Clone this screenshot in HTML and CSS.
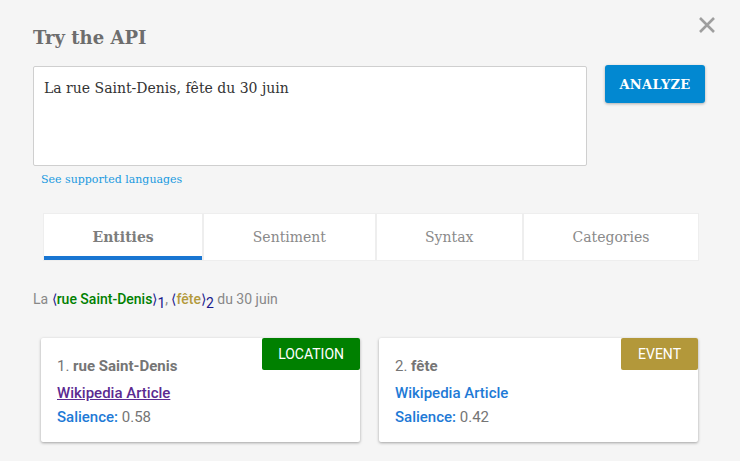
FILE: index.html
```html
<!DOCTYPE html>
<html>
<head>
<meta charset="utf-8">
<link rel="stylesheet" href="styles.css">
</head>
<body>
<div class="dialog">
  <div class="header">
    <h1 class="title">Try the API</h1>
    <button class="close" aria-label="Close">
      <svg width="18" height="18" viewBox="0 0 18 18"><path d="M2 2 L16 16 M16 2 L2 16" stroke="#9e9e9e" stroke-width="2.6" fill="none"/></svg>
    </button>
  </div>
  <div class="input-row">
    <div class="input-col">
      <div class="textarea">La rue Saint-Denis, fête du 30 juin</div>
      <a class="langs" href="#">See supported languages</a>
    </div>
    <button class="analyze">ANALYZE</button>
  </div>
  <div class="tabs">
    <div class="tab active">Entities</div>
    <div class="tab">Sentiment</div>
    <div class="tab">Syntax</div>
    <div class="tab">Categories</div>
  </div>
  <p class="annotated">La <span class="br">⟨</span><span class="loc">rue Saint-Denis</span><span class="br">⟩<sub>1</sub></span>, <span class="br">⟨</span><span class="evt">fête</span><span class="br">⟩<sub>2</sub></span> du 30 juin</p>
  <div class="cards">
    <div class="card">
      <span class="badge badge-loc">LOCATION</span>
      <div class="name">1. <b>rue Saint-Denis</b></div>
      <a class="wiki visited" href="#">Wikipedia Article</a>
      <div class="sal"><span class="sal-label">Salience:</span> 0.58</div>
    </div>
    <div class="card">
      <span class="badge badge-evt">EVENT</span>
      <div class="name">2. <b>fête</b></div>
      <a class="wiki" href="#">Wikipedia Article</a>
      <div class="sal"><span class="sal-label">Salience:</span> 0.42</div>
    </div>
  </div>
</div>
</body>
</html>
```
FILE: styles.css
```css
html, body { margin: 0; padding: 0; }
body {
  background: #f5f5f5;
  font-family: "DejaVu Serif", serif;
  width: 740px;
  height: 461px;
  overflow: hidden;
}
.dialog { padding: 0 24px 0 33px; }
.header {
  display: flex;
  justify-content: space-between;
  align-items: flex-start;
  height: 66px;
}
.title {
  margin: 26px 0 0 0;
  font-size: 18px;
  font-weight: bold;
  color: #6d6d6d;
  line-height: 24px;
}
.close {
  margin-top: 16px;
  background: none;
  border: 0;
  padding: 0;
  width: 18px;
  height: 18px;
}
.input-row { display: flex; align-items: flex-start; }
.input-col { width: 554px; }
.textarea {
  box-sizing: border-box;
  height: 100px;
  background: #fff;
  border: 1px solid #cfcfcf;
  border-radius: 2px;
  padding: 11px 10px;
  font-size: 14px;
  line-height: 20px;
  color: #333;
}
.langs {
  display: block;
  margin: 6px 0 0 8px;
  font-size: 11px;
  color: #1a9ae0;
  text-decoration: none;
  line-height: 15px;
}
.analyze {
  margin: -1px 0 0 18px;
  width: 100px;
  height: 38px;
  background: #0288d1;
  border: 0;
  border-radius: 3px;
  box-shadow: 0 1px 3px rgba(0,0,0,0.3);
  color: #fff;
  font-family: "DejaVu Serif", serif;
  font-weight: bold;
  font-size: 13px;
  letter-spacing: 0.3px;
}
.tabs {
  display: flex;
  margin: 26px 17px 0 10px;
  gap: 2px;
  background: #eee;
  border: 1px solid #eee;
}
.tab {
  flex: 1 1 auto;
  background: #fff;
  text-align: center;
  font-size: 14px;
  color: #8a8a8a;
  height: 42px;
  line-height: 46px;
  border-bottom: 4px solid #fff;
}
.tab.active {
  font-weight: bold;
  color: #7d7d7d;
  border-bottom-color: #1976d2;
}
.annotated {
  margin: 29px 0 0 0;
  font-family: Roboto, sans-serif;
  font-size: 14px;
  color: #888;
  line-height: 18px;
}
.br { color: #1a1a8c; }
.br sub { font-size: 14px; vertical-align: -4px; line-height: 0; }
.loc { color: #008000; font-weight: 500; }
.evt { color: #b39a3c; font-weight: 500; }
.cards {
  display: flex;
  gap: 19px;
  margin: 30px 0 0 8px;
  font-family: Roboto, sans-serif;
}
.card {
  position: relative;
  box-sizing: border-box;
  width: 319px;
  height: 104px;
  background: #fff;
  border-radius: 2px;
  box-shadow: 0 1px 3px rgba(0,0,0,0.35);
  padding: 18px 16px 0 16px;
}
.badge {
  position: absolute;
  top: 0;
  right: 0;
  height: 32px;
  line-height: 32px;
  padding: 0 16px;
  color: #fff;
  font-size: 14px;
  border-radius: 2px;
}
.badge-loc { background: #008000; }
.badge-evt { background: #b3983a; padding: 0 17px; }
.name { font-size: 15px; color: #757575; line-height: 20px; }
.name b { font-weight: bold; }
.wiki {
  display: inline-block;
  margin-top: 7px;
  font-size: 15px;
  font-weight: 500;
  color: #1e7ad6;
  text-decoration: none;
  line-height: 20px;
}
.wiki.visited { color: #5b2a91; text-decoration: underline; }
.sal { margin-top: 4px; font-size: 15px; color: #757575; line-height: 20px; }
.sal-label { color: #1e7ad6; font-weight: 500; }
```
